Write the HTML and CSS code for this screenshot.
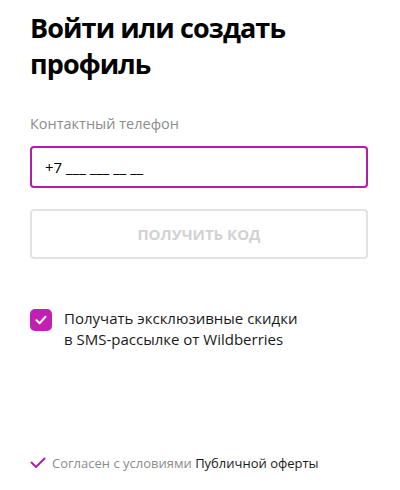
FILE: index.html
```html
<!DOCTYPE html>
<html lang="ru">
<head>
<meta charset="utf-8">
<link rel="stylesheet" href="styles.css">
</head>
<body>
<div class="page">
  <h1 class="title">Войти или создать профиль</h1>
  <div class="label">Контактный телефон</div>
  <div class="input">+7 ___ ___ __ __</div>
  <div class="button">Получить код</div>
  <div class="check-row">
    <span class="checkbox">
      <svg width="14" height="14" viewBox="0 0 14 14"><path d="M2.5 7.2 L5.6 10.2 L11.5 3.8" fill="none" stroke="#fff" stroke-width="2" stroke-linecap="round" stroke-linejoin="round"/></svg>
    </span>
    <span class="check-text">Получать эксклюзивные скидки<br>в SMS-рассылке от Wildberries</span>
  </div>
  <div class="footer">
    <svg class="tick" width="16" height="12" viewBox="0 0 16 12"><path d="M1.5 5.5 L6 10 L14.5 1.5" fill="none" stroke="#b01fa5" stroke-width="2" stroke-linecap="round" stroke-linejoin="round"/></svg>
    <span class="muted">Согласен с условиями</span>&nbsp;<span class="link">Публичной оферты</span>
  </div>
</div>
</body>
</html>
```

FILE: styles.css
```css
html, body {
  margin: 0;
  padding: 0;
  background: #fff;
}
body {
  font-family: "Open Sans", "Noto Sans", "Liberation Sans", sans-serif;
  color: #000;
}
.page {
  padding: 10px 32px 0 30px;
}
.title {
  margin: 0;
  font-size: 27px;
  line-height: 36px;
  font-weight: 700;
  letter-spacing: -0.9px;
  color: #000;
  width: 300px;
}
.label {
  margin-top: 32px;
  font-size: 14.5px;
  line-height: 20px;
  color: #8c8c8c;
}
.input {
  margin-top: 12px;
  height: 42px;
  box-sizing: border-box;
  border: 2px solid #b01fa5;
  border-radius: 4px;
  padding: 0 13px;
  display: flex;
  align-items: center;
  font-size: 15px;
  color: #000;
}
.button {
  margin-top: 21px;
  height: 50px;
  box-sizing: border-box;
  border: 2px solid #e3e3e3;
  border-radius: 4px;
  display: flex;
  align-items: center;
  justify-content: center;
  font-size: 15px;
  font-weight: 700;
  text-transform: uppercase;
  color: #d2d2d2;
}
.check-row {
  margin-top: 50px;
  display: flex;
  align-items: flex-start;
  gap: 12px;
}
.checkbox {
  width: 22px;
  height: 22px;
  flex: none;
  border-radius: 5px;
  background: #c21fb3;
  display: flex;
  align-items: center;
  justify-content: center;
}
.check-text {
  font-size: 15px;
  line-height: 21px;
  color: #1a1a1a;
  margin-top: -1px;
}
.footer {
  margin-top: 104px;
  display: flex;
  align-items: center;
  font-size: 13px;
  line-height: 18px;
}
.tick {
  margin-right: 6px;
}
.muted {
  color: #8c8c8c;
}
.link {
  color: #1a1a1a;
}
```
